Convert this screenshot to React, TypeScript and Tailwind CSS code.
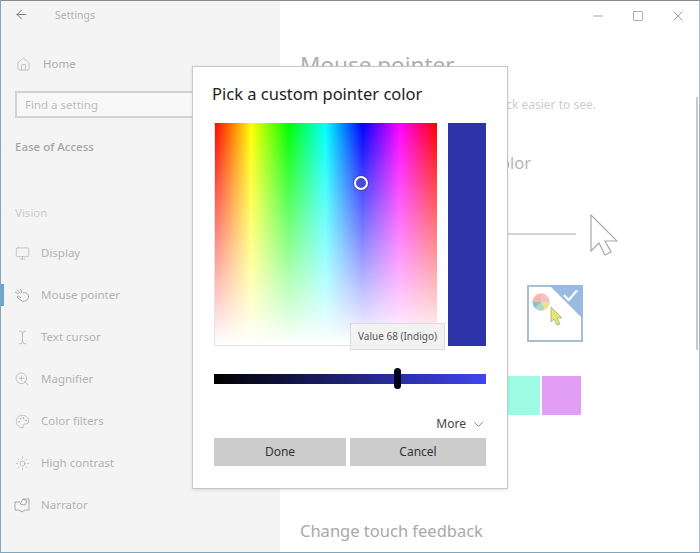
import { ArrowLeft, Home, Monitor, TextCursor, ZoomIn, Palette, Sun, ChevronDown, Minus, Square, X } from "lucide-react";

const font = "font-['Noto_Sans','Open_Sans',sans-serif]";

function HandIcon() {
  return (
    <svg width="16" height="15" viewBox="0 0 16 15" fill="none" stroke="#a9a9a9" strokeWidth="1">
      <path d="M1 4l4 2M3 1.5l3.5 4M6.5 1l1.5 4M9 5c2-1 4 0 5 1.5s.5 4-1 5.5-4 2-6 .5L3.5 9.5c-.8-.9.5-1.8 1.3-1.2L7 10" />
    </svg>
  );
}

function NarratorIcon() {
  return (
    <svg width="16" height="15" viewBox="0 0 16 15" fill="none" stroke="#a9a9a9" strokeWidth="1">
      <path d="M6 4H1v8h4l3 2 3-2h4V1H9" />
      <path d="M6 6l3-5 4 2-2 4z" />
    </svg>
  );
}

const rows = [
  { label: "Display", icon: <Monitor size={15} strokeWidth={1} color="#a9a9a9" /> },
  { label: "Mouse pointer", icon: <HandIcon />, active: true },
  { label: "Text cursor", icon: <TextCursor size={15} strokeWidth={1} color="#a9a9a9" /> },
  { label: "Magnifier", icon: <ZoomIn size={16} strokeWidth={1} color="#a9a9a9" /> },
  { label: "Color filters", icon: <Palette size={15} strokeWidth={1} color="#a9a9a9" /> },
  { label: "High contrast", icon: <Sun size={15} strokeWidth={1} color="#a9a9a9" /> },
  { label: "Narrator", icon: <NarratorIcon /> },
];

function Sidebar() {
  return (
    <aside className="w-[279px] h-full bg-[#f4f4f5] flex flex-col shrink-0">
      <div className="h-[28px] flex items-center pl-[13px]">
        <ArrowLeft size={15} strokeWidth={1.2} color="#555555" className="mb-[2px]" />
        <span className="ml-[26px] mt-[2px] text-[10.5px] text-[#b2b2b2]">Settings</span>
      </div>
      <div className="mt-[14px] h-[42px] flex items-center pl-[15px]">
        <Home size={15} strokeWidth={1} color="#a9a9a9" />
        <span className="ml-[12px] text-[11.5px] text-[#acacac]">Home</span>
      </div>
      <div className="mt-[6px] ml-[14px] h-[27px] border-2 border-[#d2d2d2] bg-[#f8f8f8] flex items-center pl-[8px]">
        <span className="text-[11.5px] text-[#bdbdbd]">Find a setting</span>
      </div>
      <div className="mt-[15px] h-[28px] pl-[14px] flex items-center text-[11.5px] font-medium text-[#a3a3a3]">Ease of Access</div>
      <div className="mt-[38px] h-[28px] pl-[14px] flex items-center text-[11.5px] text-[#cbcbcb]">Vision</div>
      <div className="mt-[5px] flex flex-col">
        {rows.map((r) => (
          <div key={r.label} className="relative h-[42px] flex items-center pl-[13px]">
            {r.active && <div className="absolute left-0 top-[10px] w-[3px] h-[22px] bg-[#6fa3d2]" />}
            <div className="w-[16px] flex justify-center">{r.icon}</div>
            <span className="ml-[11px] text-[11.5px] text-[#b2b2b2]">{r.label}</span>
          </div>
        ))}
      </div>
    </aside>
  );
}

function BigCursor() {
  return (
    <svg width="28" height="43" viewBox="0 0 28 43" fill="#fff" stroke="#a8a8a8" strokeWidth="1.2" className="ml-[14px]">
      <path d="M1 1v36l8-8 6 12 6-3-6-11h12z" />
    </svg>
  );
}

function Tile() {
  return (
    <div className="ml-[227px] w-[56px] h-[57px]">
      <svg width="56" height="57" viewBox="0 0 56 57">
        <rect x="1" y="1" width="54" height="55" fill="#fff" stroke="#a6bdd2" strokeWidth="2" />
        <path d="M22 0h34v34z" fill="#97bbe1" />
        <path d="M37 10l4.5 5L50 5.5" fill="none" stroke="#fff" strokeWidth="2.2" />
        <circle cx="14" cy="17" r="8.5" fill="#f5b8a8" />
        <path d="M14 17V8.5a8.5 8.5 0 0 1 8.5 8.5z" fill="#f2c0c8" />
        <path d="M14 17h8.5a8.5 8.5 0 0 1-5 7.8z" fill="#f4e08a" />
        <path d="M14 17l3.5 7.8a8.5 8.5 0 0 1-9.5-1.8z" fill="#a8dcc8" />
        <path d="M14 17l-6 6a8.5 8.5 0 0 1-2.5-6z" fill="#88bfe0" />
        <path d="M24 22v15l3-3 3 6 3-1-3-6h5z" fill="#e3e66f" stroke="#a9a98a" strokeWidth="0.8" />
      </svg>
    </div>
  );
}

function Main() {
  return (
    <main className="flex-1 h-full bg-white pl-[20px] flex flex-col">
      <div className="mt-[46px] h-[36px] flex items-center text-[22.5px] text-[#aeaeae] leading-none">Mouse pointer</div>
      <div className="mt-[11px] h-[22px] flex items-center text-[12px] text-[#cdcdcd] whitespace-nowrap">Make your pointer and touch feedback easier to see.</div>
      <div className="mt-[33px] h-[28px] flex items-center text-[16.5px] text-[#b5b5b5]">Change pointer size and color</div>
      <div className="mt-[37px] flex items-start">
        <div className="mt-[19px] w-[276px] h-[2px] bg-[#d4d4d4]" />
        <BigCursor />
      </div>
      <div className="mt-[28px]"><Tile /></div>
      <div className="mt-[34px] ml-[208px] flex gap-[2px]">
        <div className="w-[32px] h-[39px] bg-[#9efbe3]" />
        <div className="w-[39px] h-[39px] bg-[#e29ef5]" />
      </div>
      <div className="mt-[102px] h-[28px] flex items-center text-[16.5px] text-[#a9a9a9]">Change touch feedback</div>
    </main>
  );
}

function Dialog() {
  return (
    <div className="absolute left-[191px] top-[65px] w-[316px] h-[423px] bg-white border border-[#c8c8c8] shadow-[0_1px_3px_rgba(0,0,0,0.12)] pl-[21px] pr-[21px] pt-[14px]">
      <div className="-ml-[2px] h-[26px] flex items-center text-[16.5px] text-[#222222] whitespace-nowrap">Pick a custom pointer color</div>
      <div className="relative mt-[16px] flex gap-[11px]">
        <div className="w-[223px] h-[223px] bg-[linear-gradient(to_right,#ff0000,#ffff00,#00ff00,#00ffff,#0000ff,#ff00ff,#ff0000)]">
          <div className="relative w-full h-full bg-[linear-gradient(to_bottom,rgba(255,255,255,0),#ffffff)] border-b border-l border-[#e4e4e4]">
            <div className="absolute left-[139px] top-[53px] w-[14px] h-[14px] rounded-full border-2 border-white bg-[#4a4adf] shadow-[0_0_0_1px_rgba(60,60,120,0.5)]" />
          </div>
        </div>
        <div className="w-[38px] h-[223px] bg-[#2e33a8]" />
        <div className="absolute left-[136px] top-[200px] w-[95px] h-[27px] bg-[#f2f2f2] border border-[#dcdcdc] flex items-center justify-center text-[10px] text-[#555555] whitespace-nowrap">Value 68 (Indigo)</div>
      </div>
      <div className="relative mt-[28px] h-[10px] bg-[linear-gradient(to_right,#000000,#4044f0)]">
        <div className="absolute left-[180px] -top-[6px] w-[7px] h-[21px] rounded-full bg-[#000018]" />
      </div>
      <div className="mt-[30px] h-[20px] flex items-center justify-end gap-[5px] text-[12px] text-[#444444]">
        <span>More</span>
        <ChevronDown size={15} strokeWidth={1.1} color="#444444" />
      </div>
      <div className="mt-[4px] flex gap-[4px]">
        <div className="w-[132px] h-[28px] bg-[#cccccc] flex items-center justify-center text-[12px] text-[#333333]">Done</div>
        <div className="w-[136px] h-[28px] bg-[#cccccc] flex items-center justify-center text-[12px] text-[#333333]">Cancel</div>
      </div>
    </div>
  );
}

export default function App() {
  return (
    <div className={`relative w-[700px] h-[553px] overflow-hidden flex bg-white border-t border-t-[#868b90] border-l border-l-[#7fa6bf] border-b border-b-[#7fa6bf] border-r border-r-[#a8bccb] ${font}`}>
      <Sidebar />
      <Main />
      <div className="absolute right-[1px] top-[96px] w-[2px] h-[253px] bg-[#c4ccd2]" />
      <div className="absolute top-[7px] left-[588px] flex items-center">
        <div className="w-[18px] flex justify-center"><Minus size={14} strokeWidth={1} color="#666666" /></div>
        <div className="ml-[22px] w-[18px] flex justify-center"><Square size={12} strokeWidth={1.1} color="#666666" /></div>
        <div className="ml-[22px] w-[18px] flex justify-center"><X size={16} strokeWidth={1} color="#666666" /></div>
      </div>
      <Dialog />
    </div>
  );
}
